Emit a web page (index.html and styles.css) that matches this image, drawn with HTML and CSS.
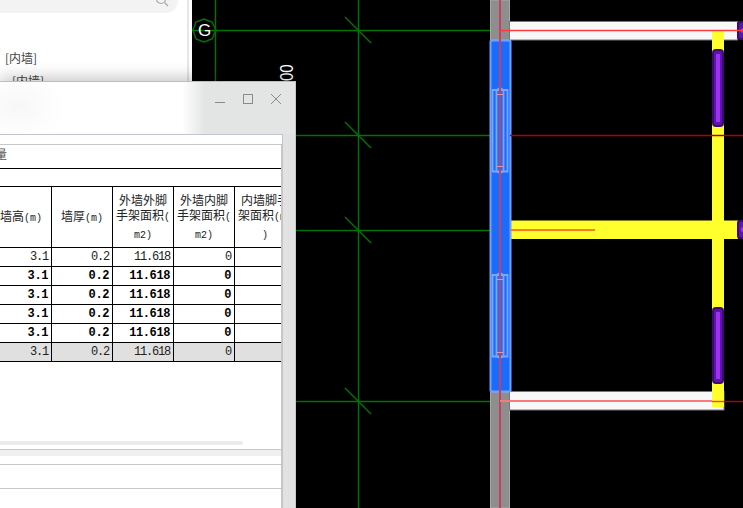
FILE: index.html
```html
<!DOCTYPE html>
<html lang="zh">
<head>
<meta charset="utf-8">
<title>脚手架面积</title>
<link rel="stylesheet" href="styles.css">
</head>
<body>
<div class="app">
  <aside class="sidebar">
    <div class="search">
      <svg class="search-icon" width="14" height="14" viewBox="0 0 14 14"><circle cx="6" cy="3" r="4.5"/><path d="M9.5 6.5 L13 10"/></svg>
    </div>
    <ul class="tree">
      <li class="tree-a">[内墙]</li>
      <li class="tree-b">[内墙]</li>
    </ul>
  </aside>
  <svg class="cad" viewBox="192 0 551 508" width="551" height="508">
    <g class="grid">
      <path d="M192 30.5H490M215.5 0V90M358.5 0V508M295 135.5H490M295 230.5H490M295 401.5H490"/>
      <path d="M345 17L371 43M345 122L371 148M345 217L371 243M345 388L371 414"/>
      <polygon points="204,19 212,22 216,30 212,39 204,42 196,39 193,30 196,22"/>
    </g>
    <text class="axis" x="204.5" y="36" text-anchor="middle">G</text>
    <text class="dim" transform="translate(293 81) rotate(-90) scale(1 1.25)">00</text>

    <rect class="column" x="490.5" y="0" width="19" height="40"/>
    <rect class="column" x="490.5" y="392" width="19" height="116"/>

    <rect class="wall-white" x="509.5" y="21.5" width="228" height="18.5"/>
    <rect class="wall-white" x="509.5" y="391.5" width="214.5" height="18.5"/>
    <rect class="wall-yellow" x="712" y="31" width="12" height="376"/>
    <rect class="wall-yellow" x="510" y="220.5" width="228" height="18.5"/>

    <g class="win-purple">
      <rect x="713" y="50" width="10" height="76" rx="3"/>
      <rect x="713" y="308" width="10" height="75" rx="3"/>
      <rect x="738" y="22" width="8" height="17" rx="2"/>
      <rect x="738" y="221" width="8" height="17" rx="2"/>
    </g>
    <path class="win-core" d="M718 54V122M718 312V379M741 30.5H745M741 229.5H745"/>

    <rect class="blue" x="490.5" y="40.5" width="20" height="351" rx="1"/>
    <g class="door">
      <path d="M492.5 90H507.5V171.5H492.5ZM496.5 90V171.5M503.5 90V171.5M496.5 90L500 88L503.5 90M496.5 171.5L500 173L503.5 171.5"/>
      <path d="M492.5 275H507.5V356.5H492.5ZM496.5 275V356.5M503.5 275V356.5M496.5 275L500 273L503.5 275M496.5 356.5L500 358L503.5 356.5"/>
    </g>

    <path class="red-v" d="M500 0V508"/>
    <path class="red-tick" d="M497 94.5H503M497 166.5H503M497 279.5H503M497 352.5H503"/>
    <path class="red-bright" d="M500 30.5H743"/>
    <path class="red-dark" d="M510 135.5H743"/>
    <path class="red-orange" d="M510 230H595"/>
    <path class="red-pink" d="M500 401H712"/>
    <path class="red-dark" d="M724 401.5H743"/>
    <path class="red-bright" d="M712 401.5H724"/>
  </svg>
</div>

<section class="window">
  <header class="titlebar">
    <div class="controls">
      <svg width="12" height="12" viewBox="0 0 12 12"><path d="M1 9.5H11"/></svg>
      <svg width="12" height="12" viewBox="0 0 12 12"><rect x="1.5" y="1.5" width="9" height="9"/></svg>
      <svg width="12" height="12" viewBox="0 0 12 12"><path d="M1 1L11 11M11 1L1 11"/></svg>
    </div>
  </header>
  <div class="content">
    <div class="box-top"></div>
    <div class="panel">
      <div class="panel-label"><span>工程量</span></div>
      <div class="table-wrap">
        <table class="qty">
          <thead>
            <tr class="band"><th colspan="5"></th></tr>
            <tr class="head">
              <th>墙高<span class="unit">(m)</span></th>
              <th>墙厚<span class="unit">(m)</span></th>
              <th>外墙外脚<br>手架面积<span class="unit">(</span><br><span class="unit">m2)</span></th>
              <th>外墙内脚<br>手架面积<span class="unit">(</span><br><span class="unit">m2)</span></th>
              <th>内墙脚手<br>架面积<span class="unit">(m2</span><br><span class="unit">)</span></th>
            </tr>
          </thead>
          <tbody>
            <tr><td>3.1</td><td>0.2</td><td>11.618</td><td>0</td><td></td></tr>
            <tr class="sum"><td>3.1</td><td>0.2</td><td>11.618</td><td>0</td><td></td></tr>
            <tr class="sum"><td>3.1</td><td>0.2</td><td>11.618</td><td>0</td><td></td></tr>
            <tr class="sum"><td>3.1</td><td>0.2</td><td>11.618</td><td>0</td><td></td></tr>
            <tr class="sum"><td>3.1</td><td>0.2</td><td>11.618</td><td>0</td><td></td></tr>
            <tr class="total"><td>3.1</td><td>0.2</td><td>11.618</td><td>0</td><td></td></tr>
          </tbody>
        </table>
      </div>
      <div class="scrollbar"></div>
    </div>
    <div class="lower">
      <div class="lower-tab"></div>
      <div class="lower-head"></div>
      <div class="lower-body"></div>
    </div>
  </div>
</section>
</body>
</html>
```

FILE: styles.css
```css
* { box-sizing: border-box; }

html, body {
  margin: 0;
  padding: 0;
  width: 743px;
  height: 508px;
  overflow: hidden;
  background: #000;
  font-family: "Noto Sans CJK SC", sans-serif;
}

.app {
  display: flex;
  width: 743px;
  height: 508px;
}

/* Left side panel */
.sidebar {
  width: 192px;
  height: 508px;
  flex: none;
  background: linear-gradient(to right, #fff 187px, #e6e6e6 187px, #e6e6e6 189px, #fff 189px);
}

.search {
  width: 178px;
  height: 13px;
  background: #f3f3f3;
  border-radius: 0 0 12px 0;
  display: flex;
  justify-content: flex-end;
  align-items: flex-end;
  padding: 0 9px 3px 0;
  overflow: hidden;
}

.search-icon circle,
.search-icon path {
  fill: none;
  stroke: #a8a8a8;
  stroke-width: 1.2;
}

.tree {
  list-style: none;
  margin: 0;
  padding: 0;
  font-size: 12px;
  line-height: 18px;
  color: #444;
}

.tree-a { margin: 36px 0 0 5px; }
.tree-b { margin: 5px 0 0 12px; }

/* CAD drawing */
.cad {
  display: block;
  flex: none;
  background: #000;
}

.grid path, .grid polygon {
  fill: none;
  stroke: #007400;
  stroke-width: 1.4;
}

.axis {
  fill: #fff;
  font: 17px "Liberation Sans", sans-serif;
}

.dim {
  fill: #fff;
  font: 15px "Liberation Sans", sans-serif;
}

.column {
  fill: #8e8e8e;
  stroke: #a8a8a8;
  stroke-width: 1;
}

.wall-white {
  fill: #f8f8f8;
  stroke: #777;
  stroke-width: 1;
}

.wall-yellow {
  fill: #ffff2e;
}

.win-purple rect {
  fill: #5a16a8;
  stroke: #3c0a78;
  stroke-width: 2;
}

.win-core {
  fill: none;
  stroke: #a030f0;
  stroke-width: 4;
}

.blue {
  fill: #1a6cff;
  stroke: #6ea2ff;
  stroke-width: 2;
}

.door path {
  fill: none;
  stroke: #78a8ff;
  stroke-width: 1.8;
}

.red-v { stroke: #c84060; stroke-width: 2; fill: none; }
.red-tick { stroke: #f090a0; stroke-width: 1; fill: none; }
.red-bright { stroke: #ff3a3a; stroke-width: 1.4; fill: none; }
.red-dark { stroke: #b40000; stroke-width: 1.4; fill: none; }
.red-orange { stroke: #ff7a1c; stroke-width: 2; fill: none; }
.red-pink { stroke: #fa7a7a; stroke-width: 2; fill: none; }

/* Floating dialog */
.window {
  position: absolute;
  left: 0;
  top: 81px;
  width: 296px;
  height: 427px;
  display: flex;
  flex-direction: column;
  background: #e2e2e2;
  border-top: 1px solid #bdbdbd;
  border-right: 1px solid #c8c8c8;
  box-shadow: 0 -4px 14px rgba(0, 0, 0, .22);
}

.titlebar {
  height: 52px;
  flex: none;
  display: flex;
  justify-content: flex-end;
  padding: 11px 13px 0 0;
  background:
    radial-gradient(ellipse 48px 34px at 18px 24px, #f7f7f7, rgba(255, 255, 255, 0)),
    linear-gradient(to right, #fff 182px, #e3e5e5 205px);
}

.controls {
  display: flex;
  gap: 16px;
}

.controls path, .controls rect {
  fill: none;
  stroke: #8a8a8a;
  stroke-width: 1;
}

.content {
  width: 283px;
  flex: 1;
  display: flex;
  flex-direction: column;
  background: #fff;
  border-top: 1px solid #c4c4cc;
  border-right: 1px solid #c4c4cc;
}

.box-top {
  height: 9px;
  flex: none;
}

.panel {
  width: 281px;
  height: 305px;
  flex: none;
  border-top: 1px solid #c8c8c8;
  box-shadow: 1px 0 0 #c8c8c8;
  display: flex;
  flex-direction: column;
}

.panel-label {
  height: 23px;
  flex: none;
  overflow: hidden;
  font-size: 12px;
  line-height: 17px;
  color: #555;
}

.panel-label span {
  display: block;
  margin-left: -29px;
}

.table-wrap {
  width: 281px;
  height: 273px;
  flex: none;
  overflow: hidden;
  border-top: 1px solid #000;
}

.qty {
  margin-left: -9px;
  width: 305px;
  table-layout: fixed;
  border-collapse: separate;
  border-spacing: 0;
  font-family: "Liberation Mono", monospace;
  font-size: 12px;
  color: #222;
}

.qty th, .qty td {
  padding: 0;
  border-right: 1px solid #000;
  border-bottom: 1px solid #000;
}

.qty .band th {
  height: 18px;
  border-right: 0;
}

.qty .head th {
  height: 61px;
  font-family: "Noto Sans CJK SC", sans-serif;
  font-weight: 400;
  font-size: 12px;
  line-height: 15px;
  text-align: center;
  color: #222;
}

.unit {
  font-family: "Liberation Mono", monospace;
  font-size: 10px;
}

.qty td {
  height: 19px;
  text-align: right;
  padding-right: 3px;
  letter-spacing: -1.2px;
  line-height: 17px;
}

.qty .sum td {
  font-weight: 700;
  color: #000;
  letter-spacing: -.4px;
}

.qty .total td {
  background: #e0e0e0;
}

.scrollbar {
  width: 243px;
  height: 4px;
  flex: none;
  background: #ebebeb;
  border-radius: 0 2px 2px 0;
}

.lower {
  flex: 1;
  display: flex;
  flex-direction: column;
  width: 281px;
  box-shadow: 1px 0 0 #c8c8c8;
}

.lower-tab {
  height: 15px;
  flex: none;
  border-top: 1px solid #c8c8c8;
  background: linear-gradient(#f0f0f0 6px, #fff 6px);
}

.lower-head {
  height: 24px;
  flex: none;
  border-top: 1px solid #c8c8c8;
}

.lower-body {
  flex: 1;
  border-top: 1px solid #c8c8c8;
}
```
